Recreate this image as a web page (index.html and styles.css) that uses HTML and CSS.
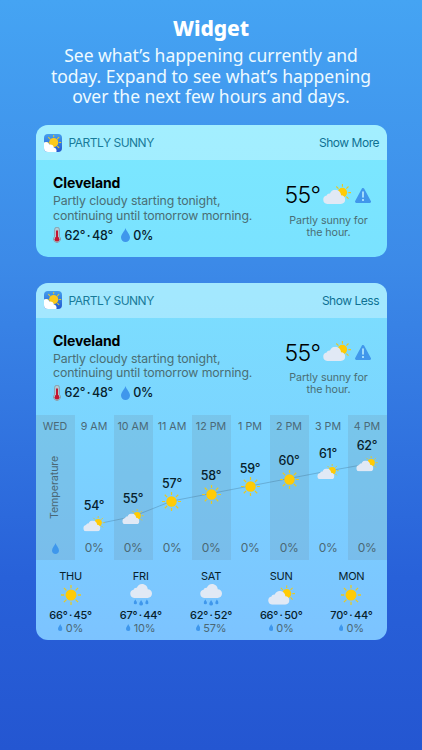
FILE: index.html
```html
<!DOCTYPE html>
<html lang="en">
<head>
    <meta charset="utf-8">
    <title>Partly Sunny - Widget</title>
    <link rel="stylesheet" href="styles.css">
</head>
<body>
    <!-- Shared icons -->
    <svg class="icon-defs" width="0" height="0">
        <defs>
            <linearGradient id="appBlue" x1="0" y1="0" x2="0" y2="1">
                <stop offset="0" stop-color="#459fee"/>
                <stop offset="1" stop-color="#2458cf"/>
            </linearGradient>
            <clipPath id="appClip"><rect width="18" height="18" rx="4"/></clipPath>
        </defs>
        <symbol id="rays" viewBox="0 0 20 20">
            <path d="M10 0V3.2M10 16.8V20M0 10H3.2M16.8 10H20M2.9 2.9L5.4 5.4M14.6 14.6L17.1 17.1M17.1 2.9L14.6 5.4M5.4 14.6L2.9 17.1" stroke="#e6c928" stroke-width="1.3" fill="none"/>
        </symbol>
        <symbol id="sun" viewBox="0 0 20 20">
            <use href="#rays" width="20" height="20"/>
            <circle cx="10" cy="10" r="5.5" fill="#ffcb05"/>
        </symbol>
        <symbol id="cloud" viewBox="0 0 22 14">
            <path d="M4.2 14A4.2 4.2 0 0 1 3.6 5.7C4.1 4.2 5.5 3.5 6.8 3.8C7.8 1.5 9.6 0 12 0C15.2 0 17.6 2.4 17.8 5.3C20.2 5.3 22 7.2 22 9.6C22 12.1 20.1 14 17.6 14Z" fill="#e1e9f5"/>
        </symbol>
        <symbol id="partly" viewBox="0 0 28 20">
            <use href="#sun" x="10.8" y="0" width="17.2" height="17.2"/>
            <use href="#cloud" x="0" y="5.8" width="22.3" height="14.2"/>
        </symbol>
        <symbol id="drop" viewBox="0 0 9 14">
            <path d="M4.5 0C5 2.7 9 6.3 9 9.5C9 12.2 7 14 4.5 14S0 12.2 0 9.5C0 6.3 4 2.7 4.5 0Z" fill="#3f97ec"/>
        </symbol>
        <symbol id="rain" viewBox="0 0 22 22">
            <use href="#cloud" width="22" height="14"/>
            <use href="#drop" x="3.6" y="15.2" width="3.4" height="5.2"/>
            <use href="#drop" x="9.1" y="15.8" width="4" height="6"/>
            <use href="#drop" x="15.2" y="15.2" width="3.4" height="5.2"/>
        </symbol>
        <symbol id="thermo" viewBox="0 0 8 16">
            <path d="M1.6 2.6a2.4 2.4 0 0 1 4.8 0V9.4a3.5 3.5 0 1 1-4.8 0Z" fill="#b3cbd4" stroke="#83959f" stroke-width="0.8"/>
            <path d="M4 3.6V12" stroke="#c21530" stroke-width="2"/>
            <circle cx="4" cy="12.2" r="2.4" fill="#c21530"/>
        </symbol>
        <symbol id="alert" viewBox="0 0 16 15">
            <path d="M8 1.4L14.6 13.6H1.4Z" fill="#4197eb" stroke="#4197eb" stroke-width="2.8" stroke-linejoin="round"/>
            <path d="M8 4V9" stroke="#b9ecff" stroke-width="1.6" stroke-linecap="round"/>
            <circle cx="8" cy="12" r="1.1" fill="#b9ecff"/>
        </symbol>
        <symbol id="app" viewBox="0 0 18 18">
            <g clip-path="url(#appClip)">
                <rect width="18" height="18" fill="url(#appBlue)"/>
                <use href="#rays" x="2" y="0.8" width="15.4" height="15.4"/>
                <circle cx="9.7" cy="8.5" r="4.6" fill="#fcc91b"/>
                <path d="M0 8.6C2.1 7.4 4.7 8.4 5.4 10.5C7.8 10.2 9.7 11.4 9.8 13.4C11.9 13.6 13.1 15.6 12.4 18H0Z" fill="#fff"/>
            </g>
        </symbol>
    </svg>

    <div class="intro">
        <h1>Widget</h1>
        <p>See what’s happening currently and<br>today. Expand to see what’s happening<br>over the next few hours and days.</p>
    </div>

    <!-- Collapsed widget -->
    <div class="widget widget-small">
        <div class="widget-header">
            <svg class="app-icon"><use href="#app"/></svg>
            <span class="app-name">PARTLY SUNNY</span>
            <span class="toggle">Show More</span>
        </div>
        <div class="current">
            <div class="summary">
                <div class="city">Cleveland</div>
                <div class="description">Partly cloudy starting tonight,<br>continuing until tomorrow morning.</div>
                <div class="stats">
                    <svg class="thermo-icon"><use href="#thermo"/></svg>
                    <span class="range">62° · 48°</span>
                    <svg class="drop-icon"><use href="#drop"/></svg>
                    <span>0%</span>
                </div>
            </div>
            <div class="now">
                <div class="now-row">
                    <span class="now-temp">55°</span>
                    <svg class="now-icon"><use href="#partly"/></svg>
                    <svg class="alert-icon"><use href="#alert"/></svg>
                </div>
                <div class="now-text">Partly sunny for<br>the hour.</div>
            </div>
        </div>
    </div>

    <!-- Expanded widget -->
    <div class="widget widget-large">
        <div class="widget-header">
            <svg class="app-icon"><use href="#app"/></svg>
            <span class="app-name">PARTLY SUNNY</span>
            <span class="toggle">Show Less</span>
        </div>
        <div class="current">
            <div class="summary">
                <div class="city">Cleveland</div>
                <div class="description">Partly cloudy starting tonight,<br>continuing until tomorrow morning.</div>
                <div class="stats">
                    <svg class="thermo-icon"><use href="#thermo"/></svg>
                    <span class="range">62° · 48°</span>
                    <svg class="drop-icon"><use href="#drop"/></svg>
                    <span>0%</span>
                </div>
            </div>
            <div class="now">
                <div class="now-row">
                    <span class="now-temp">55°</span>
                    <svg class="now-icon"><use href="#partly"/></svg>
                    <svg class="alert-icon"><use href="#alert"/></svg>
                </div>
                <div class="now-text">Partly sunny for<br>the hour.</div>
            </div>
        </div>

        <div class="hourly">
            <svg class="trend" viewBox="0 0 351 145">
                <polyline points="68,107.5 97,101.5 136,86 175,78.5 214,71 253,63.5 292,56 331,49"/>
            </svg>
            <div class="hour">
                <div class="hour-name">WED</div>
                <div class="axis">Temperature</div>
                <svg class="axis-drop"><use href="#drop"/></svg>
            </div>
            <div class="hour">
                <div class="hour-name">9 AM</div>
                <div class="reading" style="margin-top: 60px"><span>54°</span><svg class="hour-partly"><use href="#partly"/></svg></div>
                <div class="chance">0%</div>
            </div>
            <div class="hour">
                <div class="hour-name">10 AM</div>
                <div class="reading" style="margin-top: 52.5px"><span>55°</span><svg class="hour-partly"><use href="#partly"/></svg></div>
                <div class="chance">0%</div>
            </div>
            <div class="hour">
                <div class="hour-name">11 AM</div>
                <div class="reading" style="margin-top: 37.5px"><span>57°</span><svg class="hour-sun"><use href="#sun"/></svg></div>
                <div class="chance">0%</div>
            </div>
            <div class="hour">
                <div class="hour-name">12 PM</div>
                <div class="reading" style="margin-top: 30px"><span>58°</span><svg class="hour-sun"><use href="#sun"/></svg></div>
                <div class="chance">0%</div>
            </div>
            <div class="hour">
                <div class="hour-name">1 PM</div>
                <div class="reading" style="margin-top: 22.5px"><span>59°</span><svg class="hour-sun"><use href="#sun"/></svg></div>
                <div class="chance">0%</div>
            </div>
            <div class="hour">
                <div class="hour-name">2 PM</div>
                <div class="reading" style="margin-top: 15px"><span>60°</span><svg class="hour-sun"><use href="#sun"/></svg></div>
                <div class="chance">0%</div>
            </div>
            <div class="hour">
                <div class="hour-name">3 PM</div>
                <div class="reading" style="margin-top: 7.5px"><span>61°</span><svg class="hour-partly"><use href="#partly"/></svg></div>
                <div class="chance">0%</div>
            </div>
            <div class="hour">
                <div class="hour-name">4 PM</div>
                <div class="reading" style="margin-top: 0px"><span>62°</span><svg class="hour-partly"><use href="#partly"/></svg></div>
                <div class="chance">0%</div>
            </div>
        </div>

        <div class="daily">
            <div class="day">
                <div class="day-name">THU</div>
                <svg class="day-icon"><use href="#sun"/></svg>
                <div class="day-range">66° · 45°</div>
                <div class="day-chance"><svg><use href="#drop"/></svg>0%</div>
            </div>
            <div class="day">
                <div class="day-name">FRI</div>
                <svg class="day-icon day-rain"><use href="#rain"/></svg>
                <div class="day-range">67° · 44°</div>
                <div class="day-chance"><svg><use href="#drop"/></svg>10%</div>
            </div>
            <div class="day">
                <div class="day-name">SAT</div>
                <svg class="day-icon day-rain"><use href="#rain"/></svg>
                <div class="day-range">62° · 52°</div>
                <div class="day-chance"><svg><use href="#drop"/></svg>57%</div>
            </div>
            <div class="day">
                <div class="day-name">SUN</div>
                <svg class="day-icon day-partly"><use href="#partly"/></svg>
                <div class="day-range">66° · 50°</div>
                <div class="day-chance"><svg><use href="#drop"/></svg>0%</div>
            </div>
            <div class="day">
                <div class="day-name">MON</div>
                <svg class="day-icon"><use href="#sun"/></svg>
                <div class="day-range">70° · 44°</div>
                <div class="day-chance"><svg><use href="#drop"/></svg>0%</div>
            </div>
        </div>
    </div>
</body>
</html>
```
FILE: styles.css
```css
* {
    box-sizing: border-box;
}

body {
    margin: 0;
    height: 750px;
    overflow: hidden;
    font-family: Inter, "Liberation Sans", sans-serif;
    color: #07212b;
    background: linear-gradient(#45a4f3 0%, #3c8ae8 35%, #2861d9 77%, #2456d1 100%);
}

svg {
    display: block;
    flex-shrink: 0;
}

.icon-defs {
    position: absolute;
}

.intro {
    height: 125px;
    padding-top: 15px;
    text-align: center;
    color: #fff;
    font-family: "Noto Sans", "Open Sans", sans-serif;
    white-space: nowrap;
}

.intro h1 {
    margin: 0;
    font-size: 21px;
    line-height: 27px;
    font-weight: 800;
    letter-spacing: -0.1px;
}

.intro p {
    margin: 3px 0 0;
    color: #eefaff;
    font-size: 17.5px;
    line-height: 20.5px;
}

/* Widget card */
.widget {
    width: 351px;
    margin-left: 35.5px;
    border-radius: 12px;
    overflow: hidden;
}

.widget-small {
    height: 132px;
    background: linear-gradient(#7be8ff, #7ae2ff);
}

.widget-large {
    height: 357.5px;
    margin-top: 25.5px;
    background: linear-gradient(#7cdffe, #7bd2ff 50%, #7cc3ff);
}

.widget-header {
    display: flex;
    align-items: center;
    height: 35px;
    padding: 0 7.5px 0 8.5px;
    background: rgba(255, 255, 255, 0.3);
    color: #187b9a;
    font-size: 12px;
}

.app-icon {
    width: 18px;
    height: 18px;
    margin-right: 6.5px;
}

.app-name {
    letter-spacing: -0.5px;
}

.toggle {
    margin-left: auto;
    color: #0e7193;
    letter-spacing: -0.48px;
}

.current {
    display: flex;
    justify-content: space-between;
    height: 97px;
    padding: 13px 14px 0 17.5px;
    white-space: nowrap;
}

.city {
    font-size: 14px;
    line-height: 19px;
    font-weight: 700;
    letter-spacing: -0.1px;
    color: #000;
}

.description {
    font-size: 12.3px;
    line-height: 14.7px;
    letter-spacing: -0.12px;
    color: #4a6e74;
    margin-top: 2px;
}

.stats {
    display: flex;
    align-items: center;
    margin-top: 3.5px;
    height: 17px;
    font-size: 12.5px;
    font-weight: 500;
    letter-spacing: -0.15px;
}

.range {
    word-spacing: -1.7px;
}

.thermo-icon {
    width: 8px;
    height: 16px;
    margin-right: 3.5px;
}

.drop-icon {
    width: 9px;
    height: 14px;
    margin: 0 3px 0 8px;
}

.now {
    width: 88px;
    text-align: center;
}

.now-row {
    display: flex;
    align-items: center;
    height: 32px;
    margin-top: 6px;
}

.now-temp {
    width: 36px;
    margin-right: 2px;
    font-size: 23px;
    font-weight: 300;
    letter-spacing: -0.6px;
    color: #000;
}

.now-icon {
    width: 28px;
    height: 20px;
    margin-bottom: 3px;
}

.alert-icon {
    width: 16px;
    height: 15px;
    margin-left: 4px;
}

.now-text {
    margin-top: 3.5px;
    font-size: 10.7px;
    line-height: 12.3px;
    letter-spacing: -0.08px;
    color: #4a6e74;
}

/* Hourly chart */
.hourly {
    position: relative;
    display: flex;
    height: 145px;
    margin-top: 0.5px;
}

.trend {
    position: absolute;
    top: 0;
    left: 0;
    width: 351px;
    height: 145px;
}

.trend polyline {
    fill: none;
    stroke: rgba(60, 100, 130, 0.4);
    stroke-width: 0.8;
}

.hour {
    display: flex;
    flex-direction: column;
    align-items: center;
    width: 39px;
    white-space: nowrap;
}

.hour:nth-child(even) {
    background: rgba(110, 150, 175, 0.25);
}

.hour-name {
    height: 14px;
    margin-top: 5px;
    font-size: 10.7px;
    line-height: 14px;
    color: #4b6875;
}

.reading {
    position: relative;
    display: flex;
    flex-direction: column;
    align-items: center;
    font-size: 12.5px;
    font-weight: 500;
    letter-spacing: -0.2px;
    line-height: 16px;
    padding-top: 4px;
}

.hour-sun {
    width: 19px;
    height: 19px;
    margin-top: 0.5px;
}

.hour-partly {
    width: 22px;
    height: 15.5px;
    margin: 2px 1px 0 0;
}

.chance {
    margin-top: auto;
    margin-bottom: 4px;
    font-size: 12px;
    line-height: 16px;
    letter-spacing: -0.4px;
    color: #4b6875;
}

.axis {
    writing-mode: vertical-rl;
    transform: rotate(180deg);
    margin-top: 21px;
    height: 64px;
    font-size: 10.7px;
    line-height: 14px;
    text-align: center;
    letter-spacing: -0.1px;
    color: #4b6875;
}

.axis-drop {
    width: 7px;
    height: 11px;
    margin-top: auto;
    margin-bottom: 6px;
}

/* Daily forecast */
.daily {
    display: flex;
    padding-top: 9px;
}

.day {
    flex: 1;
    display: flex;
    flex-direction: column;
    align-items: center;
    font-size: 11px;
    line-height: 14px;
    letter-spacing: -0.2px;
    white-space: nowrap;
}

.day-icon {
    width: 20px;
    height: 20px;
    margin: 2px 0 3px;
}

.day-rain {
    width: 22px;
    height: 22px;
    margin: 1px 0 2px;
}

.day-partly {
    width: 27px;
    height: 20px;
}

.day-range {
    height: 13px;
    font-weight: 500;
    word-spacing: -1.3px;
}

.day-chance {
    display: flex;
    align-items: center;
    gap: 3px;
    height: 13px;
    color: #4b6875;
}

.day-chance svg {
    width: 4.5px;
    height: 7px;
}
```
